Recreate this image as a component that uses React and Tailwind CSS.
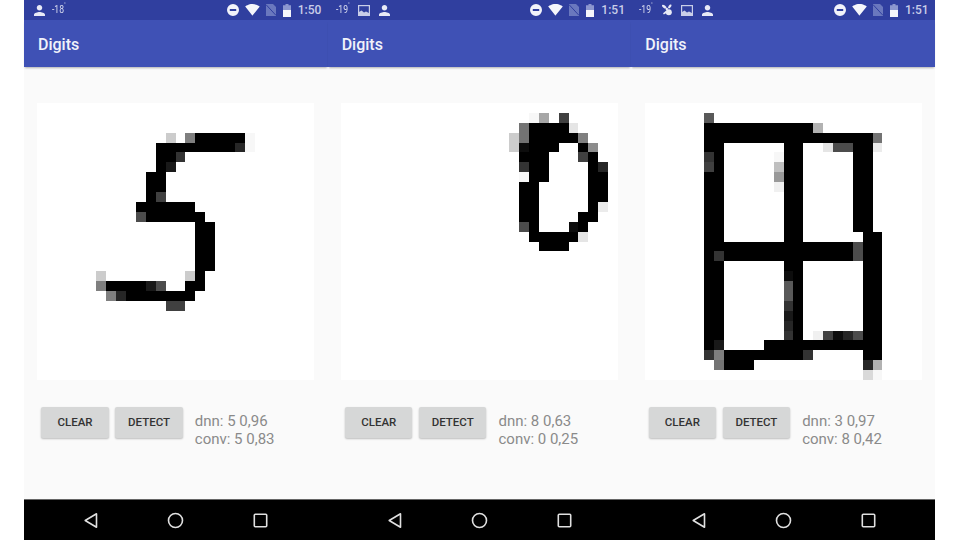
// Digit recognizer screenshots: three phones side by side

// each digit is a 28x28 grid, rows are lists of [fromCol, toCol, darkness]
const FIVE = {
  3: [[13, 13, 0.2], [15, 15, 0.5], [16, 20, 1], [21, 21, 0.03]],
  4: [[12, 19, 1], [20, 20, 0.85], [21, 21, 0.03]],
  5: [[12, 13, 1], [14, 14, 0.8]],
  6: [[12, 12, 1], [13, 13, 0.9]],
  7: [[11, 12, 1]],
  8: [[11, 12, 1]],
  9: [[11, 11, 1], [12, 12, 0.75]],
  10: [[10, 15, 1]],
  11: [[10, 10, 0.7], [11, 16, 1]],
  12: [[16, 17, 1]],
  13: [[16, 17, 1]],
  14: [[16, 17, 1]],
  15: [[16, 17, 1]],
  16: [[16, 17, 1]],
  17: [[6, 6, 0.2], [15, 15, 0.2], [16, 16, 1]],
  18: [[6, 6, 0.5], [7, 10, 1], [11, 11, 0.9], [12, 12, 0.7], [15, 16, 1]],
  19: [[7, 7, 0.5], [8, 8, 0.85], [9, 15, 1]],
  20: [[13, 14, 0.75]],
}

const ZERO = {
  1: [[19, 19, 0.03], [20, 20, 0.35], [22, 22, 0.75]],
  2: [[18, 18, 0.55], [19, 22, 1], [23, 23, 0.1]],
  3: [[17, 17, 0.2], [18, 18, 0.55], [19, 23, 1], [24, 24, 0.5]],
  4: [[17, 17, 0.2], [18, 18, 0.95], [19, 21, 1], [24, 24, 1], [25, 25, 0.45]],
  5: [[18, 20, 1], [24, 24, 0.75], [25, 25, 1]],
  6: [[18, 18, 0.8], [19, 20, 1], [25, 25, 1], [26, 26, 0.85]],
  7: [[18, 18, 0.03], [19, 20, 1], [25, 26, 1]],
  8: [[18, 19, 1], [25, 26, 1]],
  9: [[18, 19, 1], [25, 26, 1]],
  10: [[18, 19, 1], [25, 25, 1], [26, 26, 0.08]],
  11: [[18, 19, 1], [24, 25, 1]],
  12: [[18, 18, 0.7], [19, 19, 1], [23, 23, 0.95], [24, 24, 1]],
  13: [[19, 23, 1], [24, 24, 0.1]],
  14: [[20, 22, 1]],
}

const GRID = {
  1: [[6, 6, 0.65]],
  2: [[6, 16, 1], [17, 17, 0.3]],
  3: [[6, 22, 1], [23, 23, 0.55]],
  4: [[6, 7, 1], [14, 15, 1], [18, 18, 0.1], [19, 20, 0.7], [21, 22, 1], [23, 23, 0.08]],
  5: [[6, 6, 0.8], [7, 7, 1], [13, 13, 0.03], [14, 15, 1], [21, 22, 1]],
  6: [[6, 6, 0.75], [7, 7, 1], [13, 13, 0.25], [14, 15, 1], [21, 22, 1]],
  7: [[6, 7, 1], [13, 13, 0.4], [14, 15, 1], [21, 22, 1]],
  8: [[6, 7, 1], [13, 13, 0.06], [14, 15, 1], [21, 22, 1]],
  9: [[6, 7, 1], [14, 15, 1], [21, 22, 1]],
  10: [[6, 7, 1], [14, 15, 1], [21, 22, 1]],
  11: [[6, 7, 1], [14, 15, 1], [21, 22, 1]],
  12: [[6, 7, 1], [14, 15, 1], [21, 22, 1]],
  13: [[6, 7, 1], [14, 15, 1], [22, 23, 1]],
  14: [[6, 20, 1], [21, 21, 0.7], [22, 23, 1]],
  15: [[6, 6, 1], [7, 7, 0.8], [8, 20, 1], [21, 21, 0.7], [22, 23, 1]],
  16: [[6, 7, 1], [14, 15, 1], [22, 23, 1]],
  17: [[6, 7, 1], [14, 14, 0.95], [15, 15, 1], [22, 23, 1]],
  18: [[6, 7, 1], [14, 14, 0.65], [15, 15, 1], [22, 23, 1]],
  19: [[6, 7, 1], [14, 14, 0.65], [15, 15, 1], [22, 23, 1]],
  20: [[6, 7, 1], [14, 14, 0.8], [15, 15, 1], [22, 23, 1]],
  21: [[6, 7, 1], [14, 14, 0.9], [15, 15, 1], [22, 23, 1]],
  22: [[6, 7, 1], [14, 14, 0.85], [15, 15, 1], [22, 23, 1]],
  23: [[6, 7, 1], [14, 14, 0.8], [15, 15, 1], [17, 17, 0.06], [18, 18, 0.75], [19, 19, 0.95], [20, 20, 0.85], [21, 21, 0.7], [22, 23, 1]],
  24: [[6, 6, 1], [7, 7, 0.9], [12, 23, 1]],
  25: [[6, 6, 0.8], [7, 7, 0.5], [8, 15, 1], [16, 16, 0.8], [22, 23, 1]],
  26: [[7, 7, 0.55], [8, 10, 1], [22, 22, 0.85], [23, 23, 0.3]],
  27: [[22, 22, 0.15], [23, 23, 0.03]],
}

function Canvas({ digit }) {
  return (
    <div className="h-[277px] w-[277px] bg-white">
      <svg viewBox="0 0 28 28" className="h-full w-full" shapeRendering="crispEdges">
        {Object.entries(digit).map(([row, spans]) =>
          spans.map(([from, to, dark]) => (
            <rect key={row + '-' + from} x={from} y={row} width={to - from + 1} height={1} fill="#000" fillOpacity={dark} />
          ))
        )}
      </svg>
    </div>
  )
}

const PersonIcon = () => (
  <svg viewBox="4 4 16 16" className="h-[11px] w-[11px] fill-[#e8eaf6]">
    <path d="M12 12c2.21 0 4-1.79 4-4s-1.79-4-4-4-4 1.79-4 4 1.79 4 4 4zm0 2c-2.67 0-8 1.34-8 4v2h16v-2c0-2.66-5.33-4-8-4z" />
  </svg>
)

const ImageIcon = () => (
  <svg viewBox="0 0 12 11" className="h-[11px] w-[12px]">
    <rect x="0.6" y="0.6" width="10.8" height="9.8" fill="none" stroke="#c9cee8" strokeWidth="1.2" />
    <path d="M1 10V7l2.5-1.5L6 7.5 8 6.5l3 1.5v2z" fill="#c9cee8" />
  </svg>
)

const FanIcon = () => (
  <svg viewBox="0 0 12 12" className="h-[12px] w-[12px] fill-[#e8eaf6]">
    <ellipse cx="3.2" cy="2.6" rx="2.6" ry="1.3" transform="rotate(35 3.2 2.6)" />
    <ellipse cx="8.8" cy="2.4" rx="1.2" ry="2.2" transform="rotate(35 8.8 2.4)" />
    <circle cx="7.8" cy="8.2" r="3" />
    <path d="M5.4 6.6 2 9.2l.8 1.4 3.6-2z" />
    <circle cx="5.8" cy="5" r="1.2" />
  </svg>
)

function StatusRight({ time }) {
  return (
    <div className="flex items-center">
      {/* do not disturb */}
      <svg viewBox="0 0 12 12" className="h-[12px] w-[12px]">
        <path fillRule="evenodd" fill="#f2f3fa" d="M6 0a6 6 0 1 0 0 12A6 6 0 0 0 6 0zM2.8 5h6.4v2H2.8z" />
      </svg>
      {/* wifi */}
      <svg viewBox="0 3 24 19" className="ml-[6px] h-[12px] w-[15px] fill-[#f5f6fb]">
        <path d="M12.01 21.49L23.64 7c-.45-.34-4.93-4-11.64-4C5.28 3 .81 6.66.36 7l11.64 14.5z" />
      </svg>
      {/* no sim */}
      <svg viewBox="0 0 10 12" className="ml-[6px] h-[12px] w-[10px]">
        <path d="M0 0h7l3 3v9H0z" fill="#6a78be" />
        <path d="M0 .6 10 11.4" stroke="#303f9f" strokeWidth="1" />
      </svg>
      {/* battery */}
      <svg viewBox="0 0 8 13" className="ml-[7px] h-[13px] w-[8px]">
        <path d="M2.5 0h3v1.2H8V6H0V1.2h2.5z" fill="#8c97cf" />
        <path d="M0 6h8v7H0z" fill="#f5f6fb" />
      </svg>
      <span className="ml-[7px] w-[22px] text-[12px] font-medium text-[#c9cde8]">{time}</span>
    </div>
  )
}

function Phone({ temp, icons, time, digit, dnn, conv }) {
  return (
    <div className="flex h-full flex-1 flex-col bg-[#fafafa]">
      <div className="flex h-[20px] items-center justify-between bg-[#303f9f] pl-[8px] pr-[8px]">
        <div className="flex items-center">{icons(temp)}</div>
        <StatusRight time={time} />
      </div>
      <div className="flex h-[47px] items-center bg-[#3f51b5] pl-[14px] pt-[2px] text-[16px] font-medium text-[#f1f2fa] shadow-[0_2px_2px_-1px_rgba(0,0,0,0.3)]">
        Digits
      </div>
      <div className="flex flex-1 flex-col pl-[13.3px] pt-[36px]">
        <Canvas digit={digit} />
        <div className="ml-[4px] mt-[27px] flex items-start gap-[6.5px]">
          <button className="h-[31px] w-[67.5px] rounded-[2px] bg-[#d6d7d7] text-[11.5px] font-medium text-[#333] shadow-[0_1px_2px_rgba(0,0,0,0.25)]">
            CLEAR
          </button>
          <button className="h-[31px] w-[67.5px] rounded-[2px] bg-[#d6d7d7] text-[11.5px] font-medium text-[#333] shadow-[0_1px_2px_rgba(0,0,0,0.25)]">
            DETECT
          </button>
          <div className="ml-[5.5px] mt-[5px] text-[15px] leading-[18px] text-[#8a8a8a]">
            <div>{dnn}</div>
            <div>{conv}</div>
          </div>
        </div>
      </div>
      <div className="flex h-[41px] items-center justify-center gap-[68px] border-t border-[#666] bg-black">
        <svg viewBox="0 0 17 17" className="h-[17px] w-[17px] fill-none stroke-[#e0e0e0] stroke-[1.6]">
          <path d="M14.5 1.8v13.4L3.2 8.5z" strokeLinejoin="round" />
        </svg>
        <svg viewBox="0 0 17 17" className="h-[17px] w-[17px] fill-none stroke-[#e0e0e0] stroke-[1.6]">
          <circle cx="8.5" cy="8.5" r="7" />
        </svg>
        <svg viewBox="0 0 17 17" className="h-[17px] w-[17px] fill-none stroke-[#e0e0e0] stroke-[1.6]">
          <rect x="2.3" y="2.3" width="12.4" height="12.4" rx="1" />
        </svg>
      </div>
    </div>
  )
}

const Temp = ({ value }) => (
  <span className="flex w-[15px] origin-left scale-x-[0.78] text-[11px] text-[#d9dcef]">
    {value}
    <span className="-mt-[3px] text-[6px]">°</span>
  </span>
)

export default function App() {
  return (
    <div className="h-[540px] w-[960px] bg-white pl-[24px] pr-[25px] blur-[0.6px] [font-family:Roboto,sans-serif]">
      <div className="flex h-full">
        <Phone
          temp="-18"
          time="1:50"
          digit={FIVE}
          dnn="dnn: 5 0,96"
          conv="conv: 5 0,83"
          icons={(t) => (
            <>
              <span className="ml-[2px]"><PersonIcon /></span>
              <span className="ml-[7px]"><Temp value={t} /></span>
            </>
          )}
        />
        <Phone
          temp="-19"
          time="1:51"
          digit={ZERO}
          dnn="dnn: 8 0,63"
          conv="conv: 0 0,25"
          icons={(t) => (
            <>
              <Temp value={t} />
              <span className="ml-[7px]"><ImageIcon /></span>
              <span className="ml-[9px]"><PersonIcon /></span>
            </>
          )}
        />
        <Phone
          temp="-19"
          time="1:51"
          digit={GRID}
          dnn="dnn: 3 0,97"
          conv="conv: 8 0,42"
          icons={(t) => (
            <>
              <Temp value={t} />
              <span className="ml-[7px]"><FanIcon /></span>
              <span className="ml-[8px]"><ImageIcon /></span>
              <span className="ml-[9px]"><PersonIcon /></span>
            </>
          )}
        />
      </div>
    </div>
  )
}
